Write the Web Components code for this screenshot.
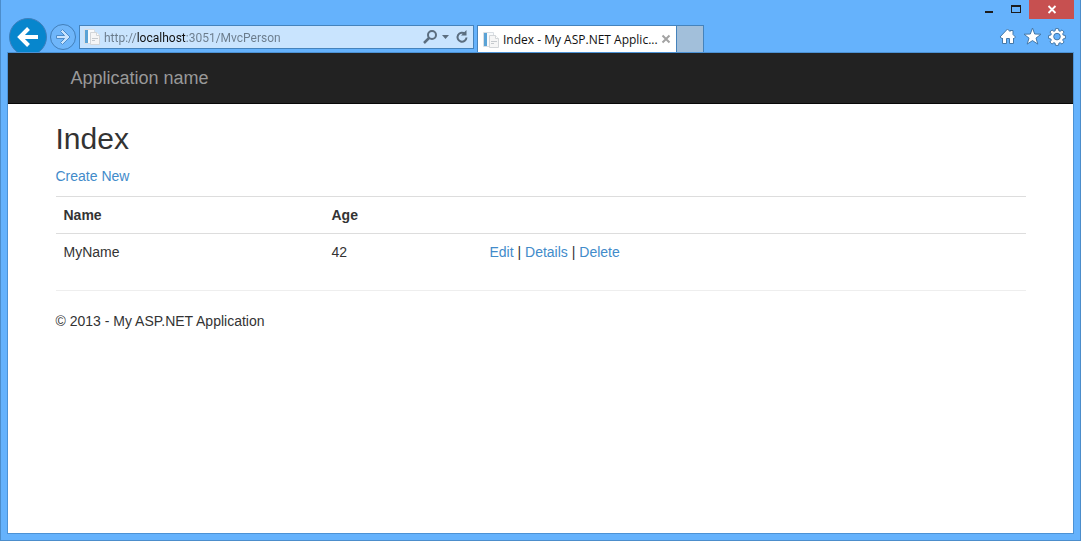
<!DOCTYPE html>
<html lang="en">
<head>
<meta charset="utf-8">
<title>Index - My ASP.NET Application</title>
<style>
html, body { height: 100%; margin: 0; }
body { font-family: "Liberation Sans", Arial, sans-serif; font-size: 14px; line-height: 20px; color: #333; }
</style>
</head>
<body>
<browser-window>
  <window-controls slot="caption"></window-controls>
  <nav-buttons slot="tools"></nav-buttons>
  <address-bar slot="tools"></address-bar>
  <tab-strip slot="tools">Index - My ASP.NET Applic...</tab-strip>
  <tool-icons slot="tools"></tool-icons>
  <app-navbar>Application name</app-navbar>
  <person-index></person-index>
</browser-window>
<script>
const define = (name, html) => customElements.define(name, class extends HTMLElement {
  constructor() {
    super();
    const t = document.createElement('template');
    t.innerHTML = html;
    this.attachShadow({ mode: 'open' }).append(t.content.cloneNode(true));
  }
});

const pageIcon = `<svg width="16" height="16" viewBox="0 0 16 16" aria-hidden="true">
  <path d="M.5.5h10v14H.5z" fill="#f8fafc" stroke="#d9dee3"/>
  <path d="M1 1h3v13H1z" fill="#5aa3d6"/>
  <path d="M6.500 3.500h6l3 3v9h-9z" fill="#f6f6f6" stroke="#d3d6d9"/>
  <path d="M12.500 3.500v3h3" fill="#fff" stroke="#d3d6d9"/>
  <path d="M8 9.500h6M8 11.500h3" stroke="#c6cace"/>
</svg>`;

define('browser-window', `<style>
  :host { display: flex; flex-direction: column; box-sizing: border-box; min-height: 100%; background: #65b2fc;
    border: solid #4c8dcb; border-width: 0 1px 1px; padding: 0 6px 6px; }
  .tools { display: flex; height: 34px; overflow: hidden; }
  .page { flex: 1; background: #fff; border: 1px solid #4c92d5; }
</style>
<header><slot name="caption"></slot><div class="tools"><slot name="tools"></slot></div></header>
<div class="page"><slot></slot></div>`);

define('window-controls', `<style>
  :host { display: flex; justify-content: flex-end; height: 18px; }
  button { border: 0; padding: 0; width: 27px; height: 19px; background: none; }
  .close { width: 45px; background: #c75050; }
  svg { display: block; margin: auto; }
</style>
<button aria-label="Minimize"><svg width="27" height="19"><path d="M10 11h8v2h-8z" fill="#1c1c1c"/></svg></button>
<button aria-label="Maximize"><svg width="27" height="19"><path d="M9 5h10v8H9zM10 7v5h8V7z" fill="#1c1c1c" fill-rule="evenodd"/></svg></button>
<button class="close" aria-label="Close"><svg width="45" height="19"><path d="M19.500 6l7 7M26.500 6l-7 7" stroke="#fff" stroke-width="1.800"/></svg></button>`);

define('nav-buttons', `<style>
  :host { display: flex; width: 72px; flex: none; }
  button { border: 0; padding: 0; background: none; height: 38px; }
  svg { display: block; }
  .back { margin-left: 2px; width: 40px; } .forward { width: 28px; }
</style>
<button class="back" aria-label="Back"><svg width="40" height="38">
  <circle cx="19" cy="19" r="18.500" fill="#0786cd" stroke="#3e7fbd"/>
  <path d="M29 19H11M19.500 10.500L11 19l8.500 8.500" fill="none" stroke="#fff" stroke-width="4"/></svg></button>
<button class="forward" aria-label="Forward"><svg width="28" height="38">
  <circle cx="14" cy="19" r="12.500" fill="#6fb6fa" stroke="#427fb9"/>
  <path d="M7.500 17.500h8l-4-4 2-2 7.500 7.500-7.500 7.500-2-2 4-4h-8z" fill="#c9e4fd" stroke="#4d8cc9"/></svg></button>`);

define('address-bar', `<style>
  :host { display: flex; align-items: center; box-sizing: border-box; flex: 0 1 395px; height: 24px; margin-top: 7px;
    border: 1px solid #4583bc; background: #c9e4fe; padding: 0 2px 0 4px; }
  svg { display: block; flex: none; }
  input { flex: 1; min-width: 0; box-sizing: border-box; height: 22px; border: 0; outline: 0; padding: 2px 0 0; margin-left: 4px;
    font: 12px/20px Roboto, "Segoe UI", sans-serif; color: transparent;
    background: linear-gradient(to right, #6a7b8b 33px, #111 33px, #111 82px, #6a7b8b 82px); background-clip: text; -webkit-background-clip: text; }
  button { border: 0; padding: 0; background: none; }
</style>
${pageIcon}
<input aria-label="Address" value="http://localhost:3051/MvcPerson" spellcheck="false">
<button aria-label="Search"><svg width="18" height="18"><circle cx="11" cy="7" r="4" fill="none" stroke="#5b6e80" stroke-width="2"/><path d="M8 10l-5 5" stroke="#5b6e80" stroke-width="2.500"/></svg></button>
<button aria-label="Show address history"><svg width="14" height="18"><path d="M3 7h7L6.500 11z" fill="#5b6e80"/></svg></button>
<button aria-label="Refresh"><svg width="18" height="18"><path d="M12 5.800A4.500 4.500 0 1 0 13.500 9.500" fill="none" stroke="#5b6e80" stroke-width="2"/><path d="M13.500 2v5.500H8z" fill="#5b6e80"/></svg></button>`);

define('tab-strip', `<style>
  :host { display: flex; flex: none; margin: 7px 0 0 3px; color: #111; font: 12px/20px "Open Sans", "Segoe UI", sans-serif; }
  .tab { display: flex; align-items: center; box-sizing: border-box; width: 200px; border: 1px solid #4583bc; border-bottom: 0; background: #fff; padding: 2px 4px 0 5px; }
  .label { flex: 1; min-width: 0; margin-left: 4px; white-space: nowrap; }
  button { border: 0; padding: 0; background: none; }
  .new { box-sizing: border-box; width: 27px; background: #a2bfda; border: solid #4583bc; border-width: 1px 1px 0 0; }
  svg { display: block; flex: none; }
</style>
<div class="tab">${pageIcon}<span class="label"><slot></slot></span>
<button aria-label="Close tab"><svg width="12" height="12"><path d="M2.500 1.500l7 7M9.500 1.500l-7 7" stroke="#a3a3a3" stroke-width="2"/></svg></button></div>
<button class="new" aria-label="New tab"></button>`);

define('tool-icons', `<style>
  :host { display: flex; gap: 6px; margin: 9px 7px 0 auto; }
  button { border: 0; padding: 0; background: none; height: 19px; }
  svg { display: block; fill: #fff; stroke: #4478a8; stroke-width: 1; }
</style>
<button aria-label="Home"><svg width="18" height="19"><path d="M8.500 2l2.500 2.500V3.500h3v4l2.500 2.500-1.500 1.500-.5-.5v5.500h-4v-5h-3v5H3.500V11l-.5.5L1 10z"/></svg></button>
<button aria-label="Favorites"><svg width="19" height="19"><path d="M9.500 1l2.200 6 6.300.2-5 3.900 1.800 6-5.300-3.500-5.300 3.500 1.800-6L1 7.200l6.300-.2z"/></svg></button>
<button aria-label="Tools"><svg width="19" height="19" viewBox="-9 -9.500 19 19">
  <path fill-rule="evenodd" d="M-1.500-7.900h3l.4 2.200 1.200.5 1.900-1.400 2.100 2.100-1.400 1.900.5 1.200 2.200.4v3l-2.200.4-.5 1.200 1.400 1.900-2.100 2.100-1.900-1.400-1.200.5-.4 2.200h-3l-.4-2.200-1.200-.5-1.900 1.400-2.100-2.100 1.400-1.900-.5-1.200-2.200-.4v-3l2.200-.4.5-1.200-1.400-1.900 2.100-2.100 1.900 1.400 1.200-.5zM0-3.200a3.300 3.300 0 1 0 0 6.600a3.300 3.300 0 1 0 0-6.600z"/></svg></button>`);

define('app-navbar', `<style>
  :host { display: block; background: #222; border-bottom: 1px solid #080808; }
  nav { max-width: 970px; margin: 0 auto; }
  a { display: inline-block; padding: 15px; font-size: 18px; line-height: 20px; color: #999; text-decoration: none; vertical-align: top; }
</style>
<nav><a href="#"><slot></slot></a></nav>`);

define('person-index', `<style>
  :host { display: block; max-width: 970px; margin: 0 auto; padding-top: 18px; }
  h2 { margin: 0 0 11px; font-size: 30px; line-height: 33px; font-weight: 500; }
  p { margin: 0 0 10px; }
  a { color: #428bca; text-decoration: none; }
  table { width: 100%; border-collapse: separate; border-spacing: 0; table-layout: fixed; margin-bottom: 20px; }
  th, td { padding: 8px; border-top: 1px solid #ddd; text-align: left; vertical-align: top; }
  .name { width: 252px; } .age { width: 142px; }
  hr { border: 0; border-top: 1px solid #eee; margin: 0 0 20px; }
</style>
<main>
<h2>Index</h2>
<p><a href="#create">Create New</a></p>
<table>
<thead><tr><th class="name">Name</th><th class="age">Age</th><th></th></tr></thead>
<tbody><tr><td>MyName</td><td>42</td><td><a href="#edit">Edit</a> | <a href="#details">Details</a> | <a href="#delete">Delete</a></td></tr></tbody>
</table>
</main>
<hr>
<footer><p>© 2013 - My ASP.NET Application</p></footer>`);
</script>
</body>
</html>
